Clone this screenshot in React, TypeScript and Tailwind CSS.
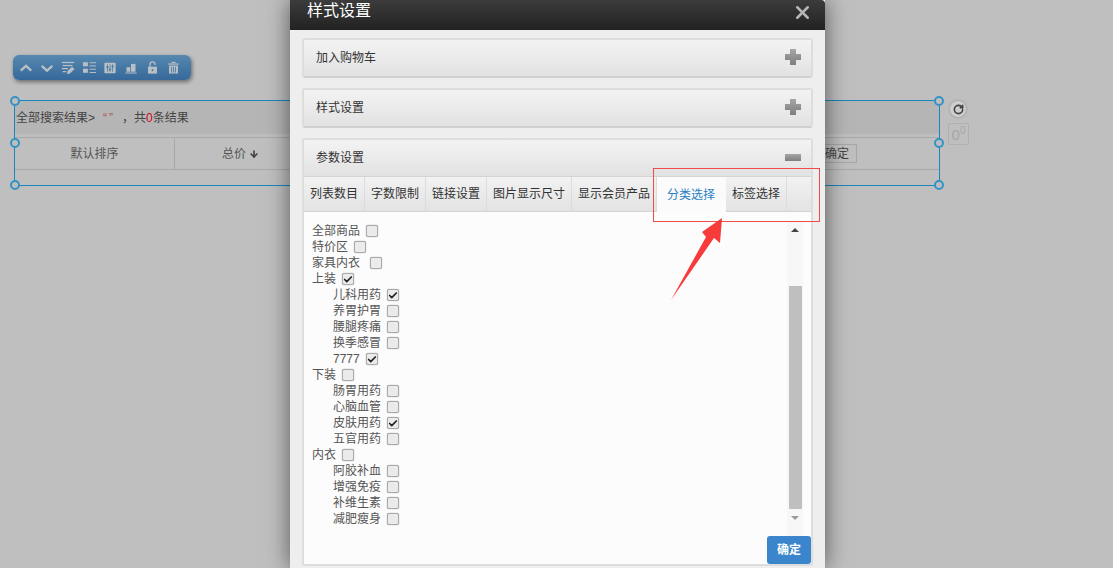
import { Check, RotateCw, X, ArrowDown } from "lucide-react";

const FONT = "font-['Liberation_Sans','Noto_Sans_CJK_SC',sans-serif]";
const ICON = "#b9bfc5";

const TABS = [
  { label: "列表数目", w: "w-[61px]" },
  { label: "字数限制", w: "w-[61px]" },
  { label: "链接设置", w: "w-[61px]" },
  { label: "图片显示尺寸", w: "w-[85px]" },
  { label: "显示会员产品", w: "w-[85px]" },
  { label: "分类选择", w: "w-[69px]", active: true },
  { label: "标签选择", w: "w-[61px]" },
];

const TREE = [
  { label: "全部商品", gap: "ml-[6px]" },
  { label: "特价区", gap: "ml-[6px]" },
  { label: "家具内衣", gap: "ml-[10px]" },
  { label: "上装", gap: "ml-[6px]", checked: true },
  { label: "儿科用药", sub: true, gap: "ml-[6px]", checked: true },
  { label: "养胃护胃", sub: true, gap: "ml-[6px]" },
  { label: "腰腿疼痛", sub: true, gap: "ml-[6px]" },
  { label: "换季感冒", sub: true, gap: "ml-[6px]" },
  { label: "7777", sub: true, gap: "ml-[6px]", checked: true },
  { label: "下装", gap: "ml-[6px]" },
  { label: "肠胃用药", sub: true, gap: "ml-[6px]" },
  { label: "心脑血管", sub: true, gap: "ml-[6px]" },
  { label: "皮肤用药", sub: true, gap: "ml-[6px]", checked: true },
  { label: "五官用药", sub: true, gap: "ml-[6px]" },
  { label: "内衣", gap: "ml-[6px]" },
  { label: "阿胶补血", sub: true, gap: "ml-[6px]" },
  { label: "增强免疫", sub: true, gap: "ml-[6px]" },
  { label: "补维生素", sub: true, gap: "ml-[6px]" },
  { label: "减肥瘦身", sub: true, gap: "ml-[6px]" },
];

function ToolIcon({ size = 12, children }: { size?: number; children: React.ReactNode }) {
  return (
    <svg width={size} height={size} viewBox="0 0 16 16" fill={ICON} stroke="none">
      {children}
    </svg>
  );
}

const TOOL_ICONS = [
  <ToolIcon key="up" size={14}>
    <path d="M2 11 L8 5.5 L14 11" fill="none" stroke={ICON} strokeWidth="2.6" />
  </ToolIcon>,
  <ToolIcon key="down" size={14}>
    <path d="M2 5.5 L8 11 L14 5.5" fill="none" stroke={ICON} strokeWidth="2.6" />
  </ToolIcon>,
  <ToolIcon key="edit" size={14}>
    <rect x="1" y="1" width="14" height="1.4" />
    <rect x="2" y="4.5" width="11" height="1.4" />
    <rect x="1" y="8" width="7" height="1.4" />
    <rect x="2" y="11.5" width="4" height="1.4" />
    <path d="M7 15 L7.5 11.5 L12.5 6.5 L15.5 9 L10.5 14 Z" />
  </ToolIcon>,
  <ToolIcon key="list" size={13}>
    <rect x="0" y="1.5" width="6" height="5" />
    <rect x="0" y="9.5" width="6" height="5" />
    <rect x="8" y="1.5" width="8" height="1.2" />
    <rect x="8" y="5.5" width="8" height="1.2" />
    <rect x="8" y="9.5" width="8" height="1.2" />
    <rect x="8" y="13.5" width="8" height="1.2" />
  </ToolIcon>,
  <ToolIcon key="sliders">
    <path
      fillRule="evenodd"
      d="M1.5 1 H14.5 A1 1 0 0 1 15.5 2 V14 A1 1 0 0 1 14.5 15 H1.5 A1 1 0 0 1 .5 14 V2 A1 1 0 0 1 1.5 1 Z M4 3 V6 H3 V8 H4 V13 H5 V8 H6 V6 H5 V3 Z M7.5 3 V9 H6.5 V11 H7.5 V13 H8.5 V11 H9.5 V9 H8.5 V3 Z M11 3 V5 H10 V7 H11 V13 H12 V7 H13 V5 H12 V3 Z"
    />
  </ToolIcon>,
  <ToolIcon key="bars">
    <rect x="2" y="7" width="5" height="6" />
    <rect x="8" y="2.5" width="6" height="10.5" />
    <rect x="0.5" y="14" width="15" height="1.3" />
  </ToolIcon>,
  <ToolIcon key="unlock" size={13}>
    <path d="M2.5 7 H13.5 V15.5 H2.5 Z" />
    <path d="M5 7 V4 A3 3 0 0 1 11 4 V5" fill="none" stroke={ICON} strokeWidth="1.6" />
    <rect x="7" y="10" width="2" height="2.5" fill="#4a7ba6" />
  </ToolIcon>,
  <ToolIcon key="trash" size={13}>
    <rect x="1.5" y="3" width="13" height="1.5" />
    <rect x="5.5" y="1" width="5" height="1.5" />
    <path
      fillRule="evenodd"
      d="M2.5 5.5 H13.5 V15.5 H2.5 Z M5 7 V14 H6 V7 Z M7.5 7 V14 H8.5 V7 Z M10 7 V14 H11 V7 Z"
    />
  </ToolIcon>,
];

function Handle({ className }: { className: string }) {
  return (
    <span
      className={`absolute h-[10px] w-[10px] rounded-full border-2 border-[#3593c4] bg-[#bdbdbd] ${className}`}
    />
  );
}

function CheckBox({ checked, className }: { checked?: boolean; className?: string }) {
  return (
    <span
      className={`flex h-[12px] w-[12px] items-center justify-center rounded-[2px] border border-[#a9a9a9] bg-[#ebebeb] shadow-[0_0_1px_#888] ${className ?? ""}`}
    >
      {checked && <Check size={11} strokeWidth={4} className="text-[#222]" />}
    </span>
  );
}

function PanelHead({ title, open }: { title: string; open?: boolean }) {
  return (
    <div className="flex h-[36px] items-center justify-between bg-gradient-to-b from-[#f3f3f3] to-[#e2e2e2] pl-[12px] pr-[10px] text-[12px] text-[#333]">
      <span>{title}</span>
      {open ? (
        <span className="mb-[1px] h-[7px] w-[16px] bg-gradient-to-b from-[#a6a6a6] to-[#7f7f7f]" />
      ) : (
        <span className="relative mb-[2px] h-[16px] w-[16px]">
          <span className="absolute left-0 top-[5px] h-[6px] w-[16px] bg-gradient-to-b from-[#9b9b9b] to-[#868686]" />
          <span className="absolute left-[5px] top-0 h-[16px] w-[6px] bg-gradient-to-b from-[#a6a6a6] to-[#7f7f7f]" />
        </span>
      )}
    </div>
  );
}

export default function App() {
  return (
    <div className={`relative h-[568px] w-[1113px] overflow-hidden bg-[#bfbfbf] ${FONT}`}>
      <div className="pl-[13px] pt-[55px]">
        <div className="flex h-[25px] w-[178px] items-center gap-[5px] rounded-[6px] bg-gradient-to-b from-[#5688b0] to-[#36699a] pl-[5px] shadow-[1px_2px_4px_rgba(0,0,0,0.45)]">
          {TOOL_ICONS.map((icon, i) => (
            <span key={i} className="flex w-[16px] justify-center">
              {icon}
            </span>
          ))}
        </div>

        <div className="relative ml-[1px] mt-[20px] h-[86px] w-[926px] border border-[#1a86bd]">
          <div className="flex h-[33px] items-center bg-[#b5b5b5] pl-[1px] text-[12px] text-[#444]">
            全部搜索结果&gt;
            <span className="ml-[8px] tracking-[2px] text-[#a55]">“”</span>
            <span className="ml-[7px]">，</span>
            共<span className="text-[#d0021b]">0</span>条结果
          </div>
          <div className="mt-[3px] flex h-[33px] border-y border-[#a8a8a8] text-[12px] text-[#555]">
            <div className="flex w-[160px] items-center justify-center border-r border-[#a8a8a8]">默认排序</div>
            <div className="flex w-[131px] items-center justify-center gap-[3px]">
              总价
              <ArrowDown size={10} strokeWidth={4} className="text-[#444]" />
            </div>
            <div className="flex flex-1 items-center justify-end pr-[82px]">
              <span className="flex h-[19px] w-[40px] items-center justify-center border border-[#a8a8a8] text-[#444]">
                确定
              </span>
            </div>
          </div>
          <Handle className="-left-[5px] -top-[5px]" />
          <Handle className="-right-[5px] -top-[5px]" />
          <Handle className="-left-[5px] top-[37px]" />
          <Handle className="-right-[5px] top-[37px]" />
          <Handle className="-bottom-[5px] -left-[5px]" />
          <Handle className="-bottom-[5px] -right-[5px]" />
          <span className="absolute -right-[27px] top-0 flex h-[16px] w-[16px] items-center justify-center rounded-full bg-[#cfcfcf] shadow-[0_0_3px_rgba(0,0,0,0.25)]">
            <RotateCw size={11} strokeWidth={3.5} className="text-[#444]" />
          </span>
          <span className="absolute -right-[30px] top-[22px] flex h-[22px] w-[21px] items-start justify-center rounded-[2px] border border-[#b0b0b0] text-[15px] leading-[22px] text-[#a6a6a6]">
            0<span className="text-[10px] leading-[13px]">0</span>
          </span>
        </div>
      </div>

      {/* dialog */}
      <div className="absolute left-[290px] top-0 flex h-[568px] w-[535px] flex-col bg-[#eeeeee] shadow-[0_0_22px_rgba(0,0,0,0.55)]">
        <div className="flex h-[30px] shrink-0 items-start justify-between rounded-tr-[4px] bg-gradient-to-b from-[#3c3c3c] to-[#222222] pl-[17px] pr-[12px] text-[16px] leading-[21px] text-white">
          <span>样式设置</span>
          <X size={21} strokeWidth={2.9} className="mt-[2px] text-[#b5b5b5]" />
        </div>

        <div className="flex flex-col gap-[10px] px-[12px] pt-[8px]">
          <div className="rounded-[3px] border-2 border-[#dddddd] border-b-[#d0d0d0]">
            <PanelHead title="加入购物车" />
          </div>
          <div className="rounded-[3px] border-2 border-[#dddddd] border-b-[#d0d0d0]">
            <PanelHead title="样式设置" />
          </div>
          <div className="h-[428px] rounded-[3px] border-2 border-[#dddddd]">
            <PanelHead title="参数设置" open />
            <div className="flex h-[36px] border-y border-[#d4d4d4] bg-gradient-to-b from-[#f2f2f2] to-[#e3e3e3] text-[12px] text-[#333]">
              {TABS.map((t) => (
                <div
                  key={t.label}
                  className={`flex items-center justify-center ${t.w} ${
                    t.active
                      ? "-mb-[1px] bg-[#fbfbfb] pr-[1px] text-[#2a7fc4]"
                      : "border-r border-[#dcdcdc]"
                  }`}
                >
                  {t.label}
                </div>
              ))}
            </div>
            <div className="flex h-[352px] bg-[#fcfcfc]">
              <div className="flex-1 pl-[8px] pt-[11px] text-[12px] leading-[16px] text-[#555]">
                {TREE.map((row) => (
                  <div key={row.label} className={`flex h-[16px] items-center ${row.sub ? "pl-[21px]" : ""}`}>
                    <span>{row.label}</span>
                    <CheckBox checked={row.checked} className={row.gap} />
                  </div>
                ))}
              </div>
              <div className="mr-[8px] mt-[10px] flex h-[314px] w-[16px] flex-col items-center bg-[#f7f7f7]">
                <span className="mt-[6px] h-0 w-0 border-x-[4px] border-b-[4px] border-x-transparent border-b-[#444]" />
                <span className="mt-[54px] h-[223px] w-[13px] bg-[#bfbfbf]" />
                <span className="mt-[7px] h-0 w-0 border-x-[4px] border-t-[4px] border-x-transparent border-t-[#999]" />
              </div>
            </div>
          </div>
        </div>

        <button className="absolute left-[477px] top-[536px] h-[28px] w-[44px] rounded-[3px] bg-[#3a85cb] text-[12px] font-bold text-white">
          确定
        </button>
      </div>

      {/* annotation */}
      <div className="absolute left-[653px] top-[168px] h-[54px] w-[167px] border border-[#f04a4a]" />
      <svg className="absolute left-0 top-0" width="1113" height="568" viewBox="0 0 1113 568">
        <polygon points="722,218 702,232 706,237 671,300 714,238 720,243" fill="#f73b3b" />
      </svg>
    </div>
  );
}
